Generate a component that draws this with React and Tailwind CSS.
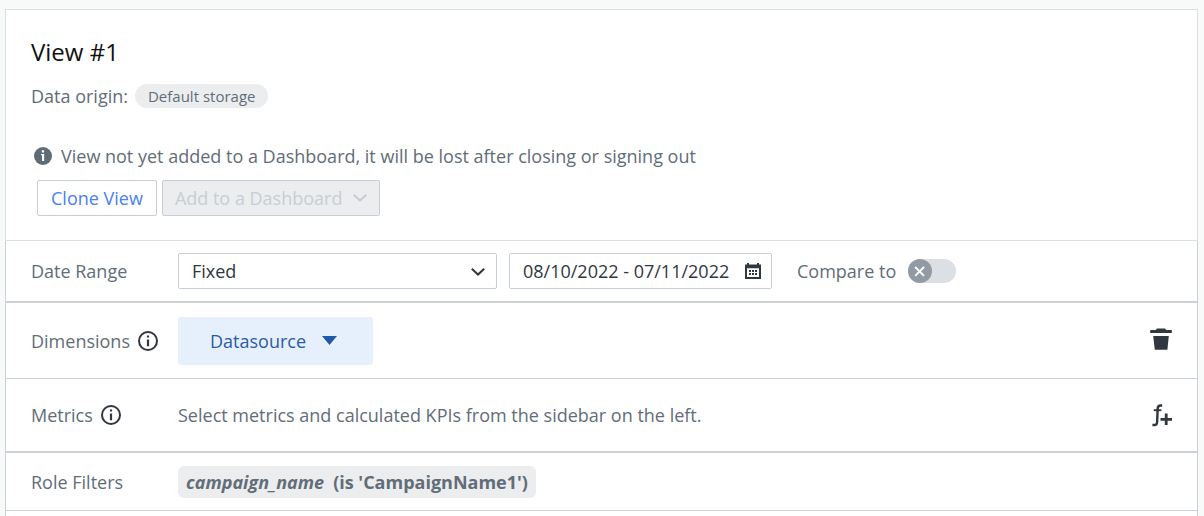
import { useState } from "react";

function InfoOutline() {
  return (
    <svg width="20" height="20" viewBox="0 0 20 20" aria-hidden="true">
      <circle cx="10" cy="10" r="9" fill="none" stroke="#30373f" strokeWidth="2" />
      <path d="M8.9 4.4h2.2v2.2H8.9zM8.9 8.6h2.2v6.6H8.9z" fill="#30373f" />
    </svg>
  );
}

function InfoSolid() {
  return (
    <svg width="18" height="18" viewBox="0 0 18 18" aria-hidden="true">
      <circle cx="9" cy="9" r="9" fill="#5f6b75" />
      <path d="M7.8 3.2h2.4v2.4H7.8zM7 7h3.2v7H8V8.2H7z" fill="#fff" />
    </svg>
  );
}

function Chevron({ className }) {
  return (
    <svg className={className} width="14" height="8" viewBox="0 0 14 8" fill="none" stroke="currentColor" strokeWidth="2" aria-hidden="true">
      <path d="M0.8 0.8 7 6.6 13.2 0.8" />
    </svg>
  );
}

function CalendarIcon() {
  return (
    <svg width="16" height="16" viewBox="0 0 16 16" aria-hidden="true">
      <path fill="#30373f" fillRule="evenodd" d="M2 0h2v1.5h8V0h2v1.5h2V16H0V1.5h2zM2 5.2V14h12V5.2z" />
      <path fill="#30373f" d="M4 7h2v2H4zM7 7h2v2H7zM10 7h2v2h-2zM4 10h2v2H4zM7 10h2v2H7zM10 10h2v2h-2z" />
    </svg>
  );
}

function TrashIcon() {
  return (
    <svg width="22" height="22" viewBox="0 0 22 22" fill="#30373f" aria-hidden="true">
      <path d="M7 0.4h8l1.2 1.6h5.6v3H0.2V2h5.6zM3.2 8h15.6l-1.4 13.8H4.8z" />
    </svg>
  );
}

function FunctionPlusIcon() {
  return (
    <svg width="20" height="23" viewBox="0 0 20 23" fill="none" stroke="#30373f" aria-hidden="true">
      <path d="M10.2 1.5H8.6C6.6 1.5 5.8 2.4 5.7 4.4L5.1 18.2C5 20.4 4.2 21 2.4 21H0.4" strokeWidth="2.4" />
      <path d="M1.8 6.2H9.4" strokeWidth="1.9" />
      <path d="M8.5 15.3H20M14.2 9.5V21.1" strokeWidth="2.8" />
    </svg>
  );
}

function Row({ label, className, children }) {
  return (
    <section className={`flex items-center border-x border-[#ccd0d7] pr-[25px] pl-[25px] ${className}`}>
      <div className="flex w-[147px] shrink-0 items-center gap-2">{label}</div>
      {children}
    </section>
  );
}

export default function App() {
  const [range, setRange] = useState("Fixed");
  const [dates, setDates] = useState("08/10/2022 - 07/11/2022");
  const [compare, setCompare] = useState(false);

  return (
    <div className="min-h-screen bg-[#f8faf9] pt-[9px] pr-[6px] pl-[5px] font-['Open_Sans',sans-serif] text-[18px] leading-6 text-[#626d78]">
      <main className="flex min-h-[507px] flex-col bg-white">
        <header className="border border-[#dcdfe1] pt-[26px] pr-6 pb-6 pl-[25px]">
          <h1 className="text-[24px] leading-8 text-[#111]">View #1</h1>
          <div className="mt-4 flex items-center gap-[7px]">
            <span>Data origin:</span>
            <span className="rounded-full bg-[#ebedef] px-[13px] text-[15px]">Default storage</span>
          </div>
          <p className="mt-9 flex items-center gap-[9px] pl-[3px]">
            <InfoSolid />
            View not yet added to a Dashboard, it will be lost after closing or signing out
          </p>
          <div className="mt-3 flex gap-[5px] pl-[6px]">
            <button type="button" className="h-9 rounded-[2px] border border-[#c8cdd6] bg-white px-[13px] text-[#4a80ee]">
              Clone View
            </button>
            <button type="button" disabled className="flex h-9 items-center gap-[11px] rounded-[2px] border border-[#c8cdd6] bg-[#ebedef] px-3 text-[#c8cdd4]">
              Add to a Dashboard
              <Chevron />
            </button>
          </div>
        </header>

        <Row className="border-b-2 py-3" label={<label htmlFor="range">Date Range</label>}>
          <div className="relative w-[319px]">
            <select
              id="range"
              value={range}
              onChange={(e) => setRange(e.target.value)}
              className="block h-9 w-full appearance-none rounded-[2px] border border-[#c8cdd6] bg-white pr-9 pl-[13px] text-[#30373f]"
            >
              <option>Fixed</option>
            </select>
            <Chevron className="pointer-events-none absolute top-[15px] right-3 text-[#30373f]" />
          </div>
          <div className="ml-3 flex h-9 w-[263px] items-center rounded-[2px] border border-[#c8cdd6] pr-[10px] pl-[13px]">
            <input
              aria-label="Dates"
              value={dates}
              onChange={(e) => setDates(e.target.value)}
              className="min-w-0 flex-1 bg-transparent text-[#30373f] outline-none"
            />
            <button type="button" aria-label="Open calendar" className="shrink-0">
              <CalendarIcon />
            </button>
          </div>
          <label htmlFor="compare" className="ml-[25px]">Compare to</label>
          <span className="relative ml-3 flex">
            <input
              id="compare"
              type="checkbox"
              role="switch"
              checked={compare}
              onChange={(e) => setCompare(e.target.checked)}
              className="peer h-6 w-12 appearance-none rounded-full bg-[#dce0e5]"
            />
            <svg className="pointer-events-none absolute top-0 left-0 peer-checked:left-6" width="24" height="24" viewBox="0 0 24 24" aria-hidden="true">
              <circle cx="12" cy="12" r="12" fill="#929ba3" />
              <path d="M7.2 8 16 16.8M16 8 7.2 16.8" stroke="#fff" strokeWidth="1.8" />
            </svg>
          </span>
        </Row>

        <Row className="min-h-[76px] border-b" label={<>Dimensions <InfoOutline /></>}>
          <button type="button" className="flex h-12 w-[195px] items-center gap-4 rounded-[3px] bg-[#e6f0fd] pl-8 text-[#2c5ba3]">
            Datasource
            <svg width="15" height="9" viewBox="0 0 15 9" fill="#2059a8" aria-hidden="true">
              <path d="M0 0h15L7.5 9z" />
            </svg>
          </button>
          <button type="button" aria-label="Delete dimensions" className="ml-auto pb-1">
            <TrashIcon />
          </button>
        </Row>

        <Row className="min-h-[74px] border-b-2" label={<>Metrics <InfoOutline /></>}>
          <p>Select metrics and calculated KPIs from the sidebar on the left.</p>
          <button type="button" aria-label="Add calculated metric" className="ml-auto">
            <FunctionPlusIcon />
          </button>
        </Row>

        <Row className="min-h-[58px] border-b" label="Role Filters">
          <p className="flex gap-[9px] rounded-[6px] bg-[#ebedef] px-2 py-1 font-bold">
            <em>campaign_name</em>
            <span>(is 'CampaignName1')</span>
          </p>
        </Row>
        <div className="flex-1 border-x border-[#ccd0d7]" />
      </main>
    </div>
  );
}
